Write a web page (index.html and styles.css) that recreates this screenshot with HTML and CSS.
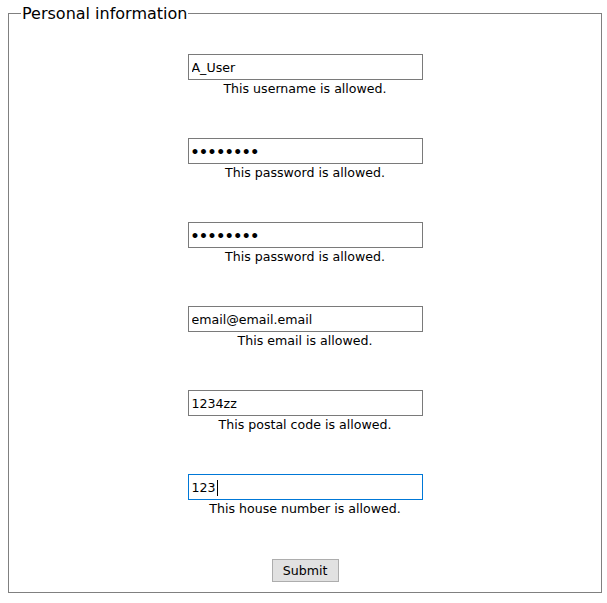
FILE: index.html
```html
<!DOCTYPE html>
<html>
<head>
<meta charset="utf-8">
<link rel="stylesheet" href="styles.css">
</head>
<body>
<form class="form">
  <fieldset class="box">
    <legend class="legend">Personal information</legend>
    <div class="fields">
      <div class="field">
        <input class="input" type="text" value="A_User">
        <span class="msg">This username is allowed.</span>
      </div>
      <div class="field">
        <input class="input pw" type="password" value="password">
        <span class="msg">This password is allowed.</span>
      </div>
      <div class="field">
        <input class="input pw" type="password" value="password">
        <span class="msg">This password is allowed.</span>
      </div>
      <div class="field">
        <input class="input" type="text" value="email@email.email">
        <span class="msg">This email is allowed.</span>
      </div>
      <div class="field">
        <input class="input" type="text" value="1234zz">
        <span class="msg">This postal code is allowed.</span>
      </div>
      <div class="field">
        <div class="input focused">123<span class="caret"></span></div>
        <span class="msg">This house number is allowed.</span>
      </div>
      <button class="submit" type="button">Submit</button>
    </div>
  </fieldset>
</form>
</body>
</html>
```
FILE: styles.css
```css
html, body {
  margin: 0;
  padding: 0;
  background: #fff;
}
body {
  padding: 4px 5px 0 8px;
  font-family: "DejaVu Sans", Verdana, sans-serif;
  color: #000;
}
.form {
  margin: 0;
}
.box {
  margin: 0;
  border: 1px solid #808080;
  padding: 0 0 10px 0;
  min-width: 0;
}
.legend {
  font-size: 16px;
  padding: 0 1px;
  margin-left: 12px;
  line-height: 19px;
}
.fields {
  display: flex;
  flex-direction: column;
  align-items: center;
  padding-top: 31px;
}
.field {
  display: flex;
  flex-direction: column;
  align-items: center;
  margin-bottom: 41px;
}
.input {
  box-sizing: border-box;
  width: 235px;
  height: 26px;
  border: 1px solid #7a7a7a;
  padding: 1px 3px 0 3px;
  font-family: "DejaVu Sans", Verdana, sans-serif;
  font-size: 12.6px;
  line-height: 23px;
  color: #000;
  background: #fff;
  margin: 0;
  outline: none;
}
.pw {
  font-size: 14px;
  font-weight: bold;
  letter-spacing: -0.4px;
  padding-left: 2px;
}
.focused {
  border-color: #0078d7;
  display: flex;
  align-items: center;
}
.caret {
  display: inline-block;
  width: 1px;
  height: 16px;
  background: #000;
  margin-left: 1px;
}
.msg {
  font-size: 12.6px;
  line-height: 16px;
  padding-top: 1px;
}
.submit {
  margin-top: 1px;
  width: 67px;
  height: 23px;
  box-sizing: border-box;
  border: 1px solid #adadad;
  background: #e1e1e1;
  font-family: "DejaVu Sans", Verdana, sans-serif;
  font-size: 12.6px;
  color: #000;
  padding: 0;
}
```
